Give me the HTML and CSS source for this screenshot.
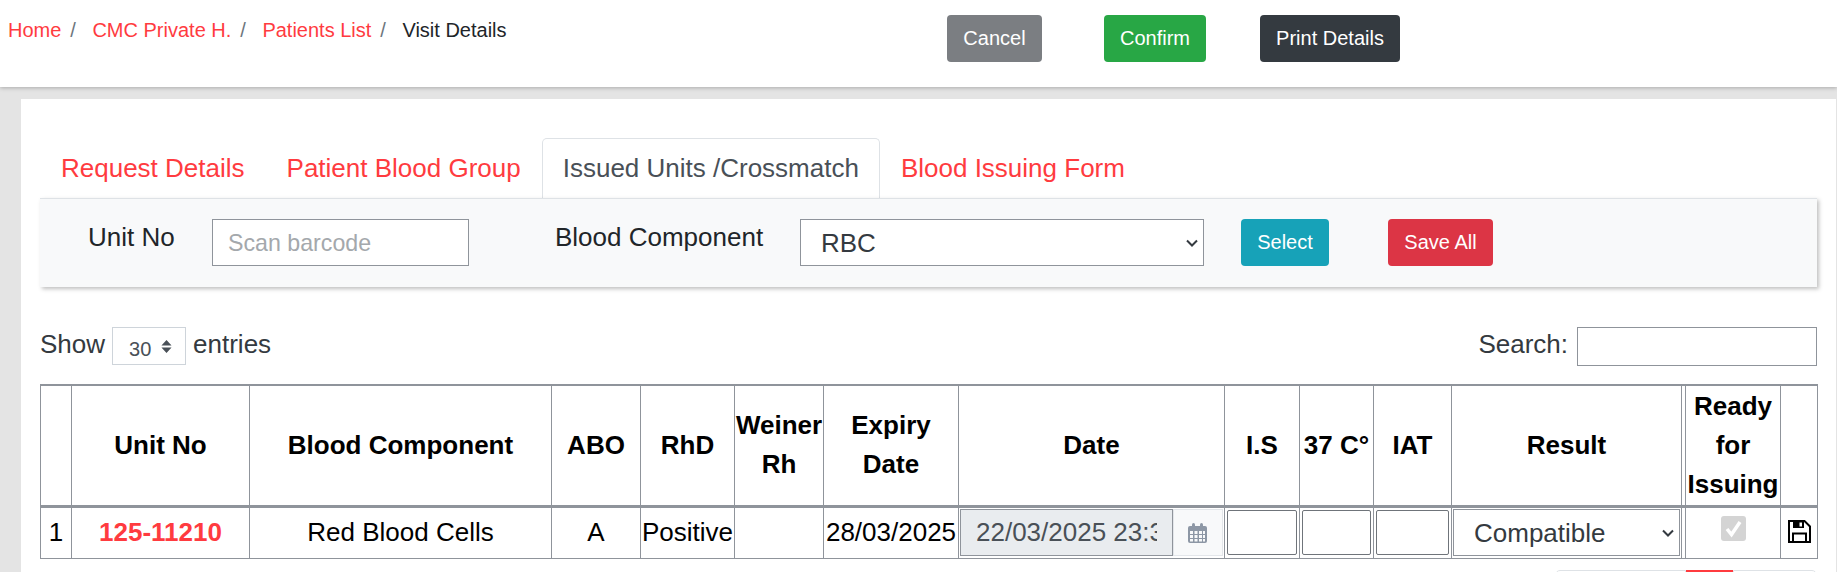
FILE: index.html
```html
<!DOCTYPE html>
<html lang="en">
<head>
    <meta charset="UTF-8">
    <title>Visit Details</title>
    <link rel="stylesheet" href="styles.css">
</head>
<body>

<div class="topbar">
    <ol class="breadcrumb">
        <li><a href="#">Home</a></li>
        <li><a href="#">CMC Private H.</a></li>
        <li><a href="#">Patients List</a></li>
        <li class="active">Visit Details</li>
    </ol>
    <div class="top-actions">
        <button class="btn btn-cancel">Cancel</button>
        <button class="btn btn-confirm">Confirm</button>
        <button class="btn btn-print">Print Details</button>
    </div>
</div>

<div class="content">
    <ul class="tabs">
        <li><a href="#">Request Details</a></li>
        <li><a href="#">Patient Blood Group</a></li>
        <li class="active"><a href="#">Issued Units /Crossmatch</a></li>
        <li><a href="#">Blood Issuing Form</a></li>
    </ul>

    <div class="scan-panel">
        <label class="scan-label label-unit">Unit No</label>
        <input class="field scan-input" type="text" placeholder="Scan barcode">
        <label class="scan-label label-comp">Blood Component</label>
        <select class="field scan-select"><option>RBC</option></select>
        <button class="btn btn-select">Select</button>
        <button class="btn btn-save">Save All</button>
    </div>

    <div class="table-tools">
        <div class="show-entries">
            Show
            <span class="length-box">30
                <svg class="updown" viewBox="0 0 12 14"><path d="M6 0 11.500 6H.5zM6 14 .5 8h11z"/></svg>
            </span>
            entries
        </div>
        <div class="search-box">
            Search:
            <input class="search-input" type="text">
        </div>
    </div>

    <table class="units">
        <colgroup>
            <col class="c-num"><col class="c-unit"><col class="c-comp"><col class="c-abo"><col class="c-rhd">
            <col class="c-weiner"><col class="c-expiry"><col class="c-date"><col class="c-is"><col class="c-37">
            <col class="c-iat"><col class="c-result"><col class="c-gap"><col class="c-ready"><col class="c-save">
        </colgroup>
        <thead>
            <tr>
                <th></th>
                <th>Unit No</th>
                <th>Blood Component</th>
                <th>ABO</th>
                <th>RhD</th>
                <th>Weiner Rh</th>
                <th>Expiry Date</th>
                <th>Date</th>
                <th>I.S</th>
                <th>37 C°</th>
                <th>IAT</th>
                <th>Result</th>
                <th></th>
                <th>Ready for Issuing</th>
                <th></th>
            </tr>
        </thead>
        <tbody>
            <tr>
                <td>1</td>
                <td class="unit-no">125-11210</td>
                <td>Red Blood Cells</td>
                <td>A</td>
                <td>Positive</td>
                <td></td>
                <td>28/03/2025</td>
                <td class="cell-input">
                    <div class="date-group">
                        <input class="date-input" type="text" value="22/03/2025 23:31" disabled>
                        <span class="date-addon">
                            <svg class="cal" viewBox="0 0 19 20">
                                <rect x="4" y="0" width="3" height="5" rx="1.500"/>
                                <rect x="12" y="0" width="3" height="5" rx="1.500"/>
                                <rect x="0" y="3" width="19" height="17" rx="2"/>
                                <path class="cal-cells" d="M2 8h3v3H2zM6.500 8h3v3h-3zM11 8h3v3h-3zM15 8h2v3h-2zM2 12h3v3H2zM6.500 12h3v3h-3zM11 12h3v3h-3zM15 12h2v3h-2zM2 16h3v2.500H2zM6.500 16h3v2.500h-3zM11 16h3v2.500h-3zM15 16h2v2.500h-2z"/>
                            </svg>
                        </span>
                    </div>
                </td>
                <td class="cell-input"><input class="mini-input" type="text"></td>
                <td class="cell-input"><input class="mini-input" type="text"></td>
                <td class="cell-input"><input class="mini-input" type="text"></td>
                <td class="cell-input"><select class="result-select"><option>Compatible</option></select></td>
                <td></td>
                <td class="cell-check"><span class="check-box"><svg viewBox="0 0 25 25"><path d="M6 13l4.500 5.500L19 6" fill="none" stroke="#fff" stroke-width="3.500"/></svg></span></td>
                <td class="cell-icon">
                    <svg class="save-icon" viewBox="0 0 23 23">
                        <path d="M1 1h15.500L22 6.500V22H1z" fill="none" stroke="#000" stroke-width="2"/>
                        <path d="M5 1h11v7H5z" fill="#000"/>
                        <path d="M11.500 2.500h2.500v4h-2.500z" fill="#fff"/>
                        <path d="M5 22v-8.500h13V22" fill="none" stroke="#000" stroke-width="2"/>
                    </svg>
                </td>
            </tr>
        </tbody>
    </table>

    <div class="pager">
        <span class="page page-prev"></span>
        <span class="page current"></span>
        <span class="page page-next"></span>
    </div>
</div>

</body>
</html>
```

FILE: styles.css
```css
:root {
    --red-link: #ff3b3f;
    --line: #8f949b;
    --ink: #343a40;
    --chevron: url("data:image/svg+xml,%3Csvg xmlns='http://www.w3.org/2000/svg' viewBox='0 0 12 8'%3E%3Cpath d='M1 1.500l5 5 5-5' fill='none' stroke='%23343a40' stroke-width='2'/%3E%3C/svg%3E");
}

* { box-sizing: border-box; }

html, body { height: 100%; overflow: hidden; }

body {
    margin: 0;
    background: #e4e4e4;
    font-family: "Liberation Sans", Arial, sans-serif;
    color: var(--ink);
}

/* top bar */
.topbar {
    height: 87px;
    background: #fff;
    box-shadow: 0 1px 4px rgba(0,0,0,0.25);
    display: flex;
    position: relative;
}

.breadcrumb {
    list-style: none;
    margin: 0;
    padding: 18px 0 0 8px;
    display: flex;
    width: 947px;
    font-size: 20px;
    line-height: 24px;
}
.breadcrumb li + li { margin-left: 16.5px; }
.breadcrumb li:not(:last-child)::after { content: "/"; margin-left: 9px; color: #6c757d; }
.breadcrumb a { color: var(--red-link); text-decoration: none; }
.breadcrumb .active { color: #212529; }

.top-actions { display: flex; padding-top: 15px; height: 62px; box-sizing: content-box; }

.btn {
    height: 47px;
    border: 1px solid transparent;
    border-radius: 4px;
    color: #fff;
    font: 20px "Liberation Sans", Arial, sans-serif;
    padding: 0;
}
.btn-cancel { width: 95px; background: #7b7e82; }
.btn-confirm { width: 102px; background: #28a745; margin-left: 62px; }
.btn-print { width: 140px; background: #343a40; margin-left: 54px; }

/* content card */
.content {
    margin: 12px 1px 0 21px;
    background: #fff;
    padding: 39px 19px 0 19px;
    height: calc(100vh - 99px);
    overflow: hidden;
}

.tabs {
    list-style: none;
    margin: 0;
    padding: 0;
    display: flex;
    height: 60px;
}
.tabs li { border: 1px solid transparent; border-bottom: 0; border-radius: 5px 5px 0 0; position: relative; }
.tabs a {
    display: block;
    padding: 14px 20px 0;
    color: var(--red-link);
    text-decoration: none;
    font-size: 26px;
    line-height: 31px;
}
.tabs .active { border-color: #dee2e6; background: #fff; }
.tabs .active a { color: #495057; }

.scan-panel {
    height: 89px;
    background: #f8f9fa;
    border-top: 1px solid #dee2e6;
    box-shadow: 2px 2px 4px rgba(0,0,0,0.25);
    display: flex;
    align-items: flex-start;
    padding-top: 20px;
    position: relative;
}

.scan-label { font-size: 26px; line-height: 30px; margin-top: 3px; color: #212529; }
.label-unit { margin-left: 48px; width: 124px; }
.label-comp { margin-left: 86px; width: 245px; }

.field {
    height: 47px;
    border: 1px solid #8f949b;
    background: #fff;
    font: 26px "Liberation Sans", Arial, sans-serif;
    color: var(--ink);
    border-radius: 0;
}
.scan-input { width: 257px; padding: 1px 15px 0; font-size: 23.2px; }
.scan-input::placeholder { color: #a4a8ac; }
.scan-select {
    width: 404px;
    padding: 0 20px;
    appearance: none;
    background: #fff var(--chevron) no-repeat right 5px center / 12px 8px;
}

.btn-select { width: 88px; background: #17a2b8; margin-left: 37px; }
.btn-save { width: 105px; background: #dc3545; margin-left: 59px; }

/* datatable tools */
.table-tools {
    display: flex;
    justify-content: space-between;
    margin-top: 40px;
    height: 57px;
    font-size: 26px;
}
.show-entries { display: flex; align-items: flex-start; gap: 7px; line-height: 34px; }
.length-box {
    width: 74px;
    height: 38px;
    border: 1px solid #ced4da;
    display: flex;
    align-items: center;
    padding: 6px 0 0 16px;
    font-size: 20px;
    color: #495057;
}
.updown { width: 11px; height: 13px; margin-left: 10px; margin-top: -6px; fill: #495057; }

.search-box { display: flex; gap: 9px; line-height: 34px; color: var(--ink); }
.search-input { width: 240px; height: 39px; border: 1px solid var(--line); background: #fff; }

/* units table */
.units {
    width: 1777px;
    table-layout: fixed;
    border-collapse: collapse;
    font-size: 26px;
    color: #000;
}
.c-num { width: 31px; }
.c-unit { width: 178px; }
.c-comp { width: 302px; }
.c-abo { width: 89px; }
.c-rhd { width: 94px; }
.c-weiner { width: 89px; }
.c-expiry { width: 135px; }
.c-date { width: 266px; }
.c-is { width: 75px; }
.c-37 { width: 74px; }
.c-iat { width: 78px; }
.c-result { width: 230px; }
.c-gap { width: 4px; }
.c-ready { width: 95px; }
.c-save { width: 37px; }

.units th, .units td {
    border: 1px solid var(--line);
    text-align: center;
    padding: 0;
    overflow: hidden;
}
.units thead th {
    height: 121px;
    border-top: 2px solid var(--line);
    border-bottom: 3px solid var(--line);
    font-weight: 700;
    line-height: 39px;
}
.units tbody td { height: 52px; }
.unit-no { color: var(--red-link); font-weight: 700; }

.date-group { display: flex; height: 47px; margin: 0 1px; }
.date-input {
    width: 213px;
    border: 1px solid var(--line);
    background: #e9ecef;
    padding: 0 15px;
    font: 26px "Liberation Sans", Arial, sans-serif;
    color: #495057;
}
.date-addon {
    flex: 1;
    background: #f8f9fa;
    border: 1px solid #e3e6ea;
    display: flex;
    align-items: center;
    justify-content: center;
    padding-right: 2px;
}
.cal { width: 19px; height: 20px; fill: #8d97a5; }
.cal-cells { fill: #f8f9fa; }

.mini-input {
    display: block;
    width: calc(100% - 4px);
    height: 45px;
    margin: 0 2px;
    border: 1px solid #6f747a;
    border-radius: 2px;
    background: #fff;
}
.result-select {
    display: block;
    width: calc(100% - 2px);
    height: 47px;
    margin: 0 1px;
    border: 1px solid #8f949b;
    font: 26px "Liberation Sans", Arial, sans-serif;
    color: var(--ink);
    padding: 0 20px;
    appearance: none;
    background: #fff var(--chevron) no-repeat right 5px center / 12px 8px;
}

.check-box {
    display: block;
    width: 25px;
    height: 25px;
    margin: -8px auto 0;
    border-radius: 3px;
    background: #d4d4d4;
}
.check-box svg { display: block; width: 25px; height: 25px; }
.save-icon { display: block; width: 23px; height: 23px; margin: -2px auto 0; }

/* pagination, only its top edge shows above the fold */
.pager {
    display: flex;
    justify-content: flex-end;
    margin-top: 11px;
    height: 40px;
}
.page {
    display: block;
    height: 40px;
    background: #fff;
    border: 1px solid #dee2e6;
}
.page-prev { width: 131px; border-radius: 5px 0 0 0; }
.page-next { width: 84px; border-radius: 0 5px 0 0; }
.page.current { width: 47px; background: var(--red-link); border-color: var(--red-link); }
```
